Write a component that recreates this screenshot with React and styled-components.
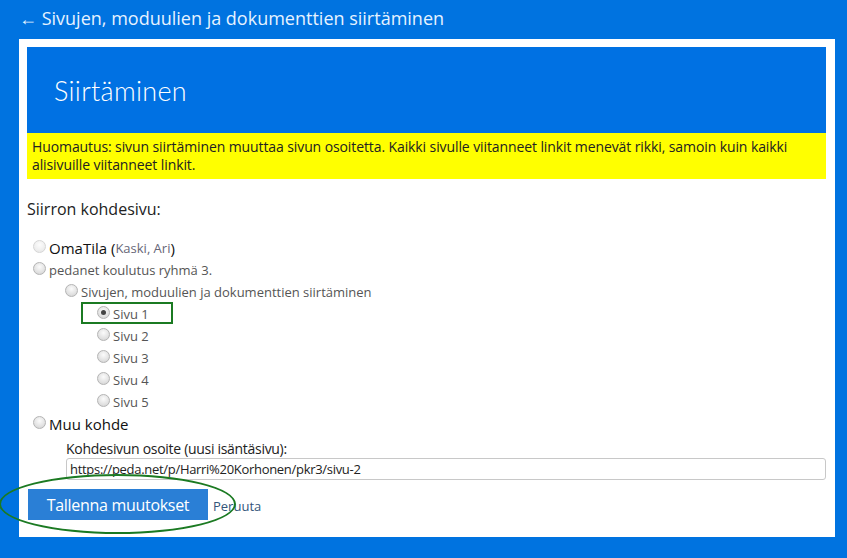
import styled, { createGlobalStyle } from "styled-components";

const GlobalStyle = createGlobalStyle`
  html, body {
    margin: 0;
    padding: 0;
    background: #0073e0;
    font-family: "Open Sans", "Liberation Sans", sans-serif;
  }
`

const Page = styled.div`
  width: 847px;
  height: 558px;
  background: #0073e0;
  padding: 7px 12px 0 19px;
  box-sizing: border-box;
`

const BackTitle = styled.div`
  color: #e6f2ff;
  font-size: 18px;
  line-height: 22px;
  margin-bottom: 10px;
`

const Card = styled.div`
  background: #fff;
  width: 816px;
  height: 498px;
  box-sizing: border-box;
  padding: 8px 9px 0 8px;
  position: relative;
`

const Header = styled.div`
  background: #0071e3;
  height: 86px;
  display: flex;
  align-items: center;
  padding-left: 27px;
`

const HeaderTitle = styled.h1`
  margin: 0;
  color: #fff;
  font-family: Lato, "Open Sans", sans-serif;
  font-weight: 300;
  font-size: 27px;
  letter-spacing: 0.3px;
`

const Notice = styled.div`
  background: #ffff00;
  color: #222;
  font-size: 14px;
  line-height: 18px;
  padding: 5px 5px 5px 5px;
  letter-spacing: -0.1px;
`

const SectionTitle = styled.div`
  font-size: 16px;
  color: #222;
  margin-top: 19px;
  margin-bottom: 17px;
`

const List = styled.div`
  display: flex;
  flex-direction: column;
`

const Row = styled.label`
  display: flex;
  align-items: center;
  height: 22px;
  padding-left: ${(p) => 6 + p.level * 32}px;
  font-size: ${(p) => (p.big ? 15 : 13)}px;
  color: ${(p) => (p.big ? "#111" : "#555")};
  position: relative;
`

const Radio = styled.span`
  width: 11px;
  height: 11px;
  border-radius: 50%;
  margin-right: 3px;
  margin-top: -3px;
  flex: none;
  border: 1px solid #b4b4b4;
  background: radial-gradient(circle at 50% 35%, #fbfbfb 0%, #e4e4e4 55%, #cfcfcf 100%);
  opacity: ${(p) => (p.faded ? 0.55 : 1)};
  display: flex;
  align-items: center;
  justify-content: center;

  &::after {
    content: "";
    display: ${(p) => (p.checked ? "block" : "none")};
    width: 5px;
    height: 5px;
    border-radius: 50%;
    background: #444;
  }
`

const Highlight = styled.span`
  position: absolute;
  left: 54px;
  top: -1px;
  width: 88px;
  height: 18px;
  border: 2px solid #1b7a22;
`

const Muted = styled.span`
  color: #667;
  font-size: 13px;
`

const Field = styled.div`
  padding-left: 39px;
  margin-top: 4px;
`

const FieldLabel = styled.div`
  font-size: 14px;
  color: #222;
  letter-spacing: -0.3px;
  margin-bottom: 0;
`

const Input = styled.input`
  display: block;
  width: 760px;
  height: 22px;
  box-sizing: border-box;
  border: 1px solid #c8c8c8;
  border-radius: 3px;
  padding: 0 3px;
  font-family: "Open Sans", sans-serif;
  font-size: 13px;
  color: #222;
  letter-spacing: -0.3px;
`

const Actions = styled.div`
  display: flex;
  align-items: center;
  margin-top: 9px;
  position: relative;
`

const SaveButton = styled.button`
  background: #2a7fd6;
  color: #fff;
  border: none;
  width: 180px;
  height: 31px;
  font-family: "Open Sans", sans-serif;
  font-size: 16px;
  letter-spacing: -0.3px;
  margin-left: 1px;
`

const Cancel = styled.a`
  font-size: 13px;
  color: #33557a;
  margin-left: 5px;
  margin-top: 3px;
`

const Ellipse = styled.span`
  position: absolute;
  left: -28px;
  top: -15px;
  width: 233px;
  height: 56px;
  border: 2px solid #1b7a22;
  border-radius: 50%;
  pointer-events: none;
`

const App = () => {
  return (
    <Page>
      <GlobalStyle />
      <BackTitle>← Sivujen, moduulien ja dokumenttien siirtäminen</BackTitle>
      <Card>
        <Header>
          <HeaderTitle>Siirtäminen</HeaderTitle>
        </Header>
        <Notice>
          Huomautus: sivun siirtäminen muuttaa sivun osoitetta. Kaikki sivulle viitanneet linkit menevät rikki, samoin kuin kaikki alisivuille viitanneet linkit.
        </Notice>
        <SectionTitle>Siirron kohdesivu:</SectionTitle>
        <List>
          <Row level={0} big>
            <Radio faded />
            OmaTila&nbsp;(<Muted>Kaski, Ari</Muted>)
          </Row>
          <Row level={0}>
            <Radio />
            pedanet koulutus ryhmä 3.
          </Row>
          <Row level={1}>
            <Radio />
            Sivujen, moduulien ja dokumenttien siirtäminen
          </Row>
          <Row level={2}>
            <Highlight />
            <Radio checked />
            Sivu 1
          </Row>
          <Row level={2}>
            <Radio />
            Sivu 2
          </Row>
          <Row level={2}>
            <Radio />
            Sivu 3
          </Row>
          <Row level={2}>
            <Radio />
            Sivu 4
          </Row>
          <Row level={2}>
            <Radio />
            Sivu 5
          </Row>
          <Row level={0} big>
            <Radio />
            Muu kohde
          </Row>
        </List>
        <Field>
          <FieldLabel>Kohdesivun osoite (uusi isäntäsivu):</FieldLabel>
          <Input defaultValue="https://peda.net/p/Harri%20Korhonen/pkr3/sivu-2" />
        </Field>
        <Actions>
          <Ellipse />
          <SaveButton>Tallenna muutokset</SaveButton>
          <Cancel>Peruuta</Cancel>
        </Actions>
      </Card>
    </Page>
  );
};

export default App;
